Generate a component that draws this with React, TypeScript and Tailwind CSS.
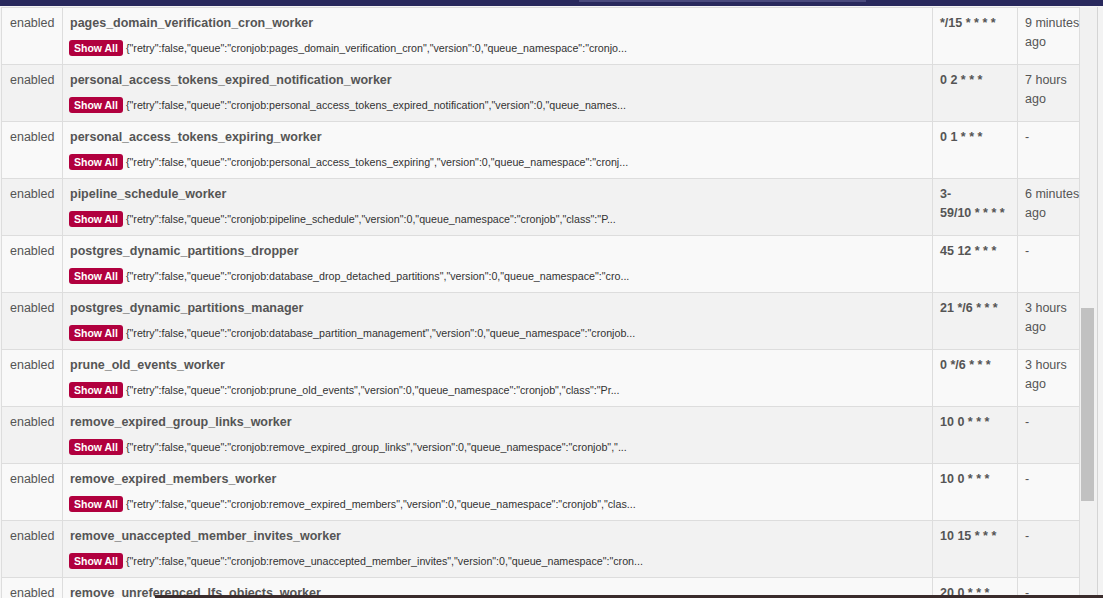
type Job = {
  name: string;
  args: string;
  cron: string[];
  last: string[];
};

const jobs: Job[] = [
  {
    name: "pages_domain_verification_cron_worker",
    args: '{"retry":false,"queue":"cronjob:pages_domain_verification_cron","version":0,"queue_namespace":"cronjo...',
    cron: ["*/15 * * * *"],
    last: ["9 minutes", "ago"],
  },
  {
    name: "personal_access_tokens_expired_notification_worker",
    args: '{"retry":false,"queue":"cronjob:personal_access_tokens_expired_notification","version":0,"queue_names...',
    cron: ["0 2 * * *"],
    last: ["7 hours", "ago"],
  },
  {
    name: "personal_access_tokens_expiring_worker",
    args: '{"retry":false,"queue":"cronjob:personal_access_tokens_expiring","version":0,"queue_namespace":"cronj...',
    cron: ["0 1 * * *"],
    last: ["-"],
  },
  {
    name: "pipeline_schedule_worker",
    args: '{"retry":false,"queue":"cronjob:pipeline_schedule","version":0,"queue_namespace":"cronjob","class":"P...',
    cron: ["3-", "59/10 * * * *"],
    last: ["6 minutes", "ago"],
  },
  {
    name: "postgres_dynamic_partitions_dropper",
    args: '{"retry":false,"queue":"cronjob:database_drop_detached_partitions","version":0,"queue_namespace":"cro...',
    cron: ["45 12 * * *"],
    last: ["-"],
  },
  {
    name: "postgres_dynamic_partitions_manager",
    args: '{"retry":false,"queue":"cronjob:database_partition_management","version":0,"queue_namespace":"cronjob...',
    cron: ["21 */6 * * *"],
    last: ["3 hours", "ago"],
  },
  {
    name: "prune_old_events_worker",
    args: '{"retry":false,"queue":"cronjob:prune_old_events","version":0,"queue_namespace":"cronjob","class":"Pr...',
    cron: ["0 */6 * * *"],
    last: ["3 hours", "ago"],
  },
  {
    name: "remove_expired_group_links_worker",
    args: '{"retry":false,"queue":"cronjob:remove_expired_group_links","version":0,"queue_namespace":"cronjob","...',
    cron: ["10 0 * * *"],
    last: ["-"],
  },
  {
    name: "remove_expired_members_worker",
    args: '{"retry":false,"queue":"cronjob:remove_expired_members","version":0,"queue_namespace":"cronjob","clas...',
    cron: ["10 0 * * *"],
    last: ["-"],
  },
  {
    name: "remove_unaccepted_member_invites_worker",
    args: '{"retry":false,"queue":"cronjob:remove_unaccepted_member_invites","version":0,"queue_namespace":"cron...',
    cron: ["10 15 * * *"],
    last: ["-"],
  },
  {
    name: "remove_unreferenced_lfs_objects_worker",
    args: '{"retry":false,"queue":"cronjob:remove_unreferenced_lfs_objects","version":0,"queue_namespace":"cron...',
    cron: ["20 0 * * *"],
    last: ["-"],
  },
];

const JobRow = ({ job, odd }: { job: Job; odd: boolean }) => (
  <div
    className={`flex border-t border-[#dddddd] ${
      odd ? "bg-[#f9f9f9]" : "bg-[#f2f2f2]"
    }`}
  >
    <div className="w-[61px] shrink-0 border-l border-[#dddddd] pl-[8px] pt-[6px] pb-[8px] leading-[19px] text-[#555]">
      enabled
    </div>
    <div className="w-[870px] shrink-0 border-l border-[#dddddd] pl-[7px] pr-[7px] pt-[6px] pb-[8px]">
      <div className="leading-[19px] font-bold text-[#555] whitespace-nowrap">
        {job.name}
      </div>
      <div className="mt-[7px] flex items-center h-[16px] -ml-[1px]">
        <button className="h-[16px] px-[5px] rounded-[3px] bg-[#b1003e] text-white font-bold text-[10.5px] leading-[16px]">
          Show All
        </button>
        <span className="ml-[3px] text-[10.7px] text-[#333] whitespace-nowrap">
          {job.args}
        </span>
      </div>
    </div>
    <div className="w-[85px] shrink-0 border-l border-[#dddddd] pl-[7px] pt-[6px] leading-[19px] font-bold text-[#555]">
      {job.cron.map((l) => (
        <div key={l} className="whitespace-nowrap">
          {l}
        </div>
      ))}
    </div>
    <div className="w-[63px] shrink-0 border-l border-r border-[#dddddd] pl-[7px] pt-[6px] leading-[19px] text-[#555]">
      {job.last.map((l) => (
        <div key={l} className="whitespace-nowrap">
          {l}
        </div>
      ))}
    </div>
  </div>
);

export default function App() {
  return (
    <div
      className="relative h-[598px] w-[1103px] overflow-hidden bg-[#f5f5f5] text-[12.5px]"
      style={{ fontFamily: '"Liberation Sans", Arial, sans-serif' }}
    >
      <div className="relative h-[6px] bg-[#29295d]">
        <div className="absolute left-[579px] top-0 h-[2px] w-[287px] bg-[#4a4a7d]" />
      </div>
      <div className="flex mt-[1px]">
        <div className="ml-[1px] w-[1079px] shrink-0">
          {jobs.map((job, i) => (
            <JobRow key={job.name} job={job} odd={i % 2 === 0} />
          ))}
        </div>
        <div className="w-[17px] shrink-0 h-[591px] bg-[#f1f1f1]">
          <div className="ml-[1px] mt-[301px] h-[193px] w-[13px] bg-[#c1c1c1]" />
        </div>
        <div className="w-px shrink-0 bg-[#d4d4d4]" />
        <div className="flex-1 bg-[#f3f3f3]" />
      </div>
      <div className="absolute bottom-0 left-[155px] right-0 h-[3px] bg-[#3a2c2c]" />
    </div>
  );
}
